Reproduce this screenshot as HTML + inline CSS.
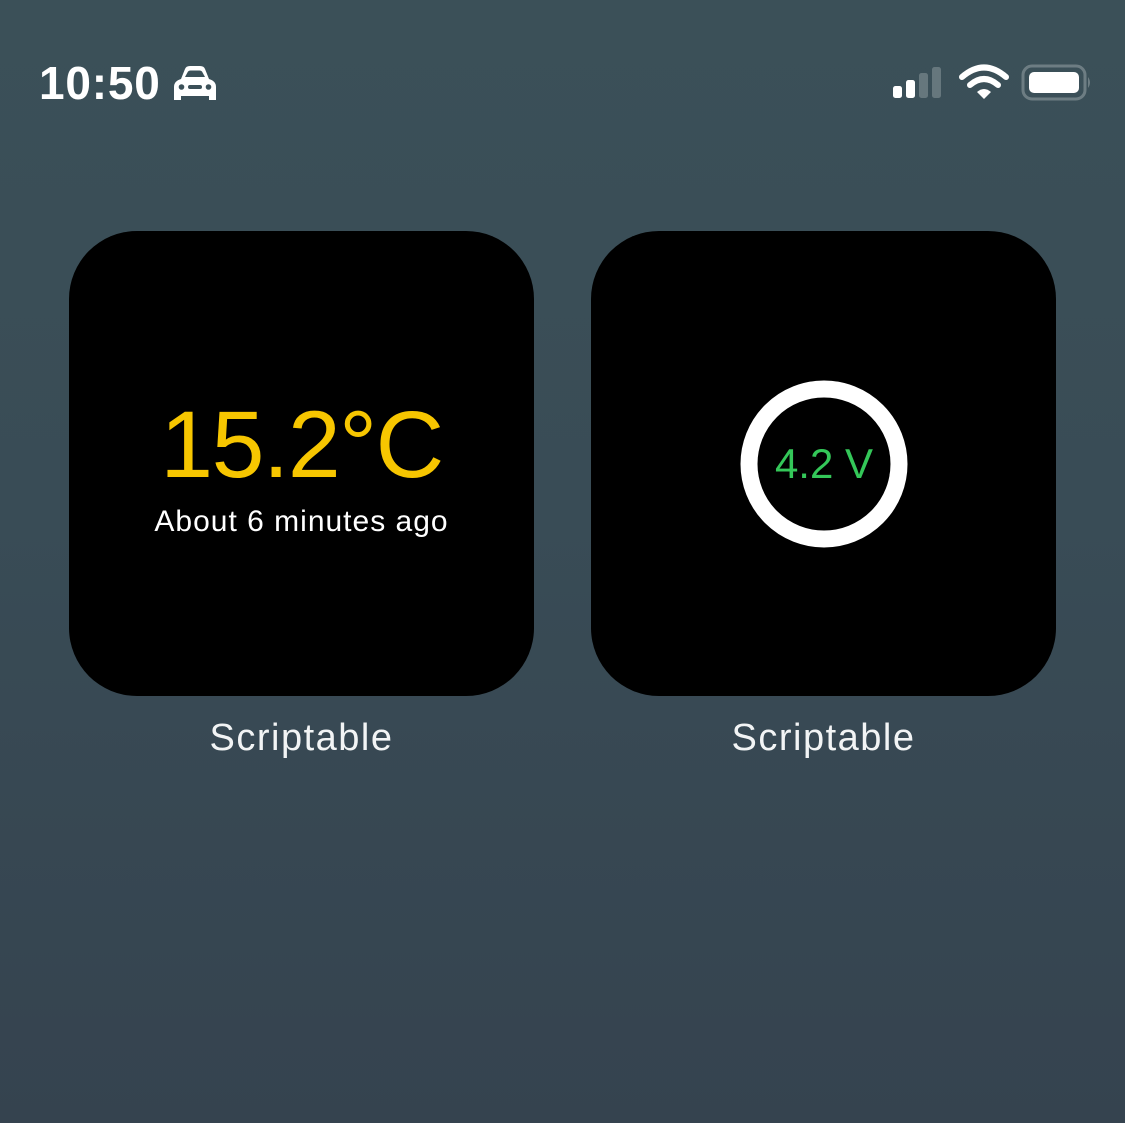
<!DOCTYPE html>
<html><head><meta charset="utf-8"><style>
html,body{margin:0;padding:0}
body{width:1125px;height:1123px;position:relative;overflow:hidden;background:linear-gradient(180deg,#3b5058 0%,#394c56 45%,#35434f 100%);font-family:"Liberation Sans",sans-serif;color:#fff}
.a{position:absolute;white-space:nowrap}
.w{position:absolute;top:231px;width:465px;height:465px;background:#000;border-radius:68px}
.lbl{position:absolute;top:717px;width:465px;text-align:center;font-size:38px;letter-spacing:1.5px;color:#f2f4f5}
</style></head><body>
<div class="a" style="left:39px;top:56px;font-size:46px;font-weight:bold;letter-spacing:0.8px;line-height:54px">10:50</div>
<svg class="a" style="left:172px;top:65px" width="46" height="36" viewBox="0 0 46 36">
<path d="M9 14 L13 4 Q14 1 18 1 L28 1 Q32 1 33 4 L37 14 Q44 16 44 22 L44 35 L37 35 L37 31 L9 31 L9 35 L2 35 L2 22 Q2 16 9 14 Z" fill="#fff"/>
<path d="M13 12 L16 6.5 Q17 5.5 18.5 5.5 L27.5 5.5 Q29 5.5 30 6.5 L33 12 Z" fill="#3b5058"/>
<circle cx="9.5" cy="22" r="2.8" fill="#3b5058"/><circle cx="36.5" cy="22" r="2.8" fill="#3b5058"/>
<rect x="16" y="20" width="14" height="4" rx="2" fill="#3b5058"/>
</svg>
<svg class="a" style="left:892px;top:66px" width="54" height="34">
<rect x="1" y="20" width="9" height="12" rx="2.5" fill="#fff"/>
<rect x="14" y="14" width="9" height="18" rx="2.5" fill="#fff"/>
<rect x="27" y="7" width="9" height="25" rx="2.5" fill="#66777d"/>
<rect x="40" y="1" width="9" height="31" rx="2.5" fill="#66777d"/>
</svg>
<svg class="a" style="left:959px;top:64px" width="50" height="36" viewBox="0 0 50 36">
<path d="M3 13 Q25 -6 47 13" stroke="#fff" stroke-width="6" fill="none" stroke-linecap="round"/>
<path d="M11 21 Q25 9 39 21" stroke="#fff" stroke-width="6" fill="none" stroke-linecap="round"/>
<path d="M18 28 L25 35 L32 28 Q25 22 18 28 Z" fill="#fff"/>
</svg>
<svg class="a" style="left:1021px;top:64px" width="72" height="38">
<rect x="2" y="2" width="62" height="33" rx="9" fill="none" stroke="#6d7d83" stroke-width="3"/>
<rect x="8" y="8" width="50" height="21" rx="5" fill="#fff"/>
<path d="M67 13 Q71 18.5 67 24 Z" fill="#6d7d83"/>
</svg>
<div class="w" style="left:69px"></div>
<div class="w" style="left:591px"></div>
<div class="a" style="left:69px;width:465px;text-align:center;top:390px;font-size:95px;line-height:110px;color:#f7c600;letter-spacing:-1.5px">15.2°C</div>
<div class="a" style="left:69px;width:465px;text-align:center;top:504px;font-size:30px;line-height:36px;letter-spacing:1px">About 6 minutes ago</div>
<svg class="a" style="left:591px;top:231px" width="465" height="465">
<circle cx="233" cy="233" r="75" fill="none" stroke="#fff" stroke-width="17"/>
<text x="233" y="247" text-anchor="middle" font-family="Liberation Sans" font-size="42" fill="#34c759">4.2 V</text>
</svg>
<div class="lbl" style="left:69px">Scriptable</div>
<div class="lbl" style="left:591px">Scriptable</div>
</body></html>
